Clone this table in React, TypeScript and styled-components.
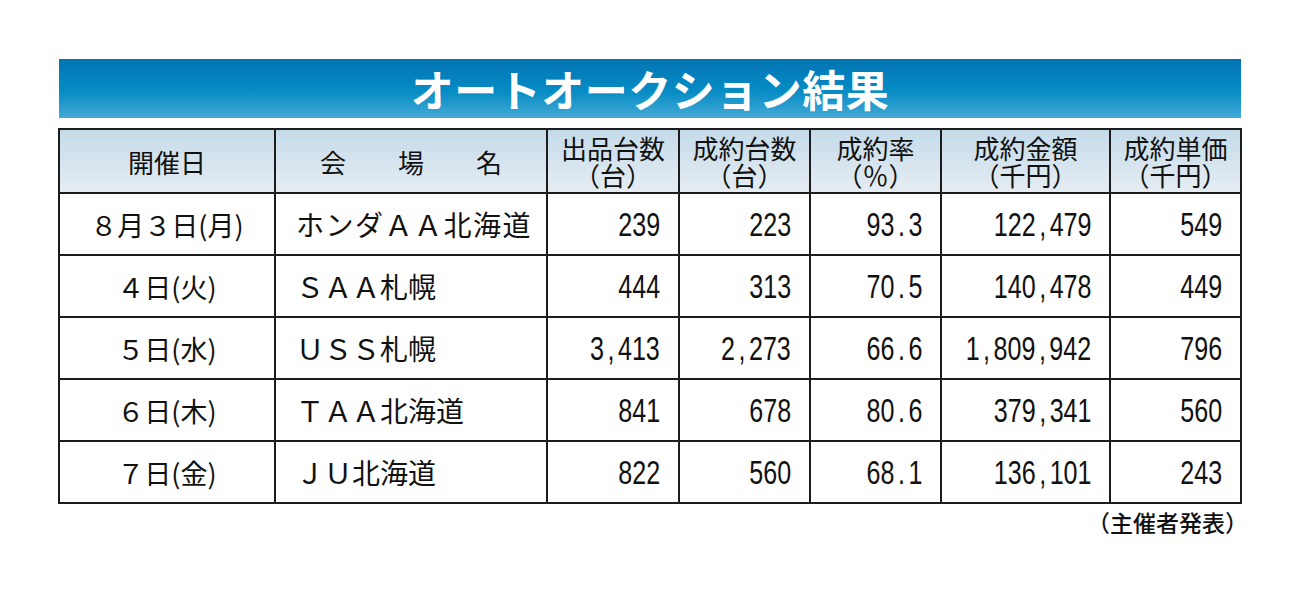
import React from 'react';
import styled, { createGlobalStyle } from 'styled-components';

const GlobalStyle = createGlobalStyle`
  html, body {
    margin: 0;
    padding: 0;
    background: #ffffff;
  }
  body {
    font-family: 'Noto Sans CJK JP', 'Noto Sans', sans-serif;
    color: #111111;
  }
`;

const Page = styled.div`
  width: 1184px;
  padding: 59px 0 0 58px;
`;

const TitleBar = styled.div`
  height: 59px;
  margin-left: 1px;
  width: 1182px;
  display: flex;
  align-items: center;
  justify-content: center;
  background: linear-gradient(to bottom, #0374b3 0%, #068cc4 55%, #44a9d6 100%);
`;

const Title = styled.h1`
  margin: 0;
  font-size: 43px;
  font-weight: 700;
  line-height: 1;
  color: #ffffff;
  letter-spacing: 0.5px;
`;

const Table = styled.table`
  margin-top: 10px;
  width: 1182px;
  table-layout: fixed;
  border-collapse: collapse;
  border: 2px solid #1c1c1c;
`;

const HeadRow = styled.tr`
  height: 64px;
  background: linear-gradient(to bottom, #c4dae9 0%, #e6edf3 100%);
`;

const HeadCell = styled.th`
  border: 2px solid #1c1c1c;
  padding: 0;
  font-size: 26px;
  font-weight: 400;
  line-height: 27px;
  text-align: center;
  white-space: pre;
`;

const Row = styled.tr`
  height: 62px;
`;

const DateCell = styled.td`
  border: 2px solid #1c1c1c;
  padding: 0;
  text-align: center;
  font-size: 27px;
  line-height: 1;
  white-space: nowrap;
`;

const VenueCell = styled.td<{ $spread?: boolean }>`
  border: 2px solid #1c1c1c;
  padding: 0 0 0 20px;
  text-align: left;
  font-size: 28px;
  line-height: 1;
  letter-spacing: ${(p) => (p.$spread ? '1.5px' : '0')};
  white-space: nowrap;
`;

const NumCell = styled.td`
  border: 2px solid #1c1c1c;
  padding: 0 18px 0 0;
  white-space: nowrap;
`;

const NumBox = styled.div`
  display: flex;
  justify-content: flex-end;
  align-items: center;
`;

const Num = styled.span`
  display: inline-block;
  flex: none;
  font-family: 'Liberation Sans', Arial, sans-serif;
  font-size: 33px;
  line-height: 1;
  transform: scaleX(0.76);
  transform-origin: right center;
`;

const Punct = styled.span`
  display: inline-block;
  width: 0.556em;
  text-align: center;
`;

const Note = styled.div`
  width: 1190px;
  text-align: right;
  font-size: 23px;
  font-weight: 500;
  line-height: 24px;
  margin-top: 6px;
`;

const widths = [216, 272, 132, 131, 131, 169, 131];

const heads = [
  '開催日',
  '会　　場　　名',
  '出品台数\n（台）',
  '成約台数\n（台）',
  '成約率\n（％）',
  '成約金額\n（千円）',
  '成約単価\n（千円）',
];

const rows = [
  { date: '８月３日(月)', venue: 'ホンダＡＡ北海道', spread: true, nums: ['239', '223', '93.3', '122,479', '549'] },
  { date: '４日(火)', venue: 'ＳＡＡ札幌', nums: ['444', '313', '70.5', '140,478', '449'] },
  { date: '５日(水)', venue: 'ＵＳＳ札幌', nums: ['3,413', '2,273', '66.6', '1,809,942', '796'] },
  { date: '６日(木)', venue: 'ＴＡＡ北海道', nums: ['841', '678', '80.6', '379,341', '560'] },
  { date: '７日(金)', venue: 'ＪＵ北海道', nums: ['822', '560', '68.1', '136,101', '243'] },
];

function Figure({ value }: { value: string }) {
  return (
    <NumBox>
      <Num>
        {value.split('').map((ch, i) =>
          ch === ',' || ch === '.' ? <Punct key={i}>{ch}</Punct> : ch
        )}
      </Num>
    </NumBox>
  );
}

export default function App() {
  return (
    <>
      <GlobalStyle />
      <Page>
        <TitleBar>
          <Title>オートオークション結果</Title>
        </TitleBar>
        <Table>
          <colgroup>
            {widths.map((w, i) => (
              <col key={i} style={{ width: w }} />
            ))}
          </colgroup>
          <thead>
            <HeadRow>
              {heads.map((h) => (
                <HeadCell key={h}>{h}</HeadCell>
              ))}
            </HeadRow>
          </thead>
          <tbody>
            {rows.map((r) => (
              <Row key={r.date}>
                <DateCell>{r.date}</DateCell>
                <VenueCell $spread={r.spread}>{r.venue}</VenueCell>
                {r.nums.map((v, i) => (
                  <NumCell key={i}>
                    <Figure value={v} />
                  </NumCell>
                ))}
              </Row>
            ))}
          </tbody>
        </Table>
        <Note>（主催者発表）</Note>
      </Page>
    </>
  );
}
